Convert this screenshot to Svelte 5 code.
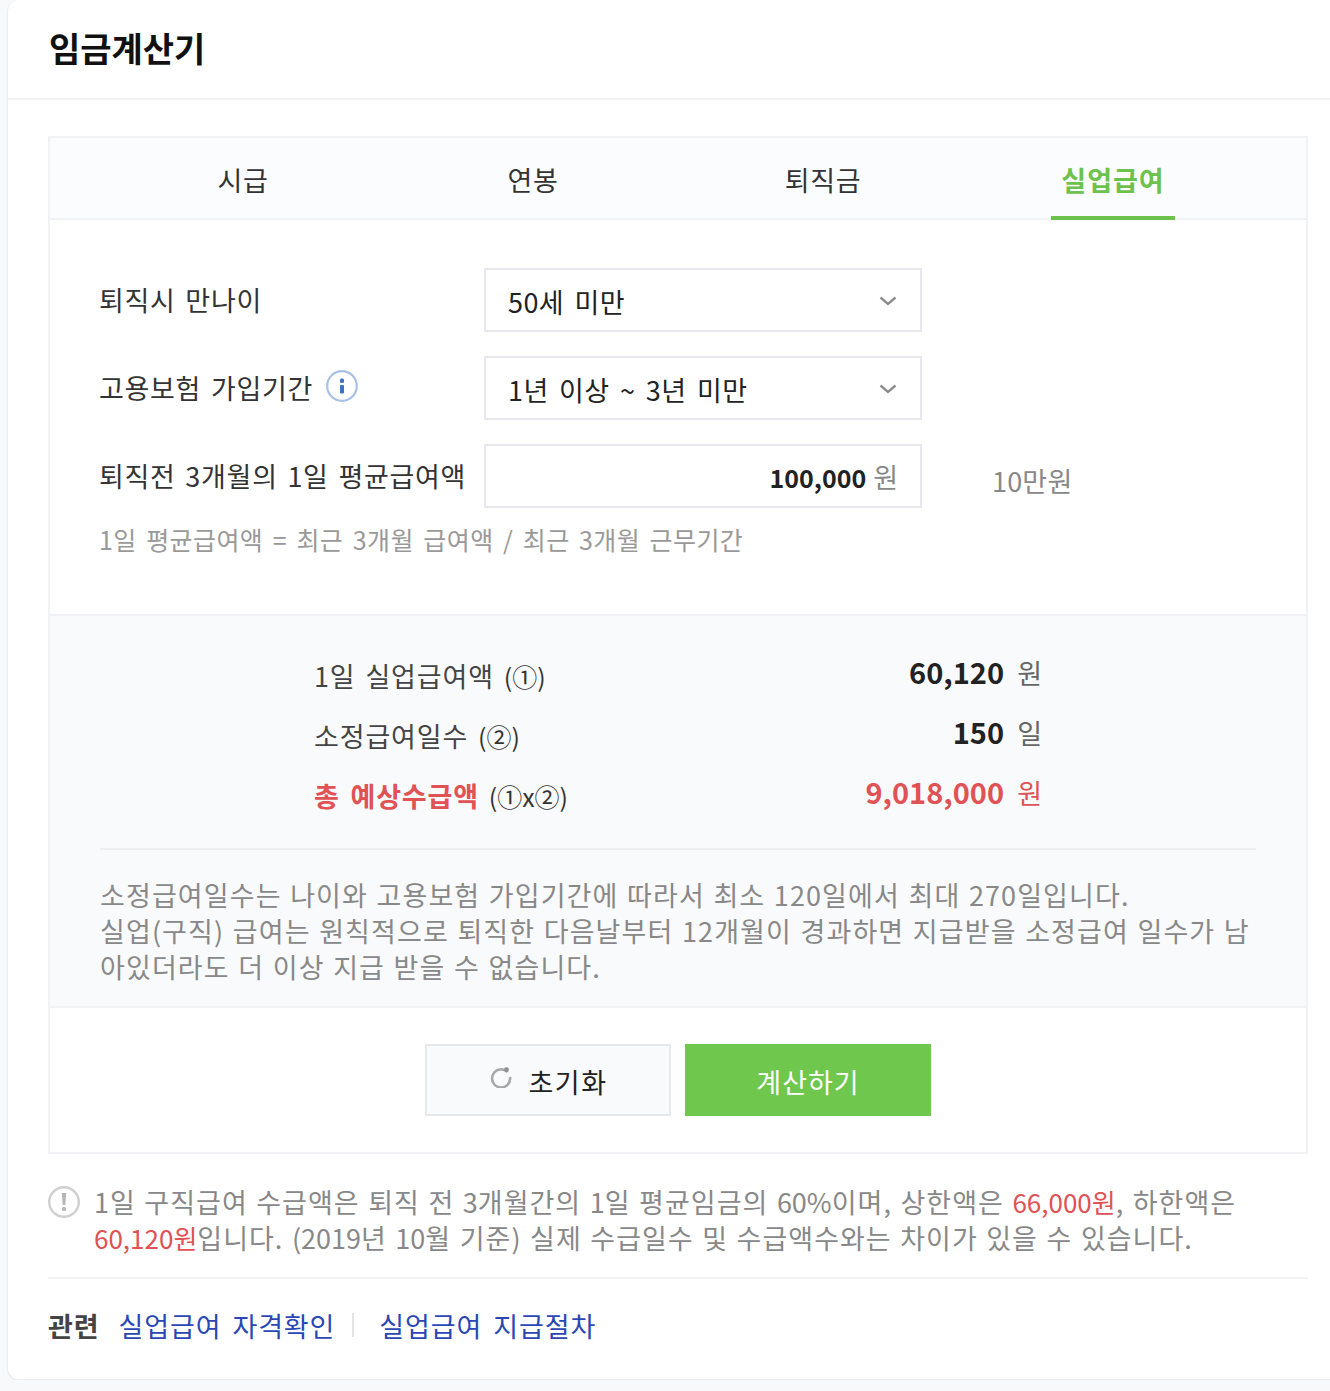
<script>
  const tabs = ['시급', '연봉', '퇴직금', '실업급여'];
  let active = $state(3);
  let age = $state('50세 미만');
  let period = $state('1년 이상 ~ 3년 미만');
  let pay = $state('100,000');

  const results = [
    { label: '1일 실업급여액', note: '(①)', value: '60,120', unit: '원' },
    { label: '소정급여일수', note: '(②)', value: '150', unit: '일' },
    { label: '총 예상수급액', note: '(①x②)', value: '9,018,000', unit: '원', total: true },
  ];
</script>

<div class="card">
  <h1 class="title">임금계산기</h1>

  <div class="body">
    <div class="calc">
      <nav class="tabs">
        {#each tabs as t, i}
          <button class="tab" class:on={active === i} onclick={() => (active = i)}><span>{t}</span></button>
        {/each}
      </nav>

      <div class="form">
        <div class="row">
          <span class="label">퇴직시 만나이</span>
          <div class="field">
            <select bind:value={age}>
              <option>50세 미만</option>
              <option>50세 이상</option>
            </select>
            <svg class="chev" width="18" height="10" viewBox="0 0 18 10"><path d="M1.5 1.5 9 8l7.5-6.5" fill="none" stroke="#8c8c8c" stroke-width="2.4"/></svg>
          </div>
        </div>
        <div class="row">
          <span class="label">고용보험 가입기간
            <svg class="info" width="32" height="32" viewBox="0 0 32 32">
              <circle cx="16" cy="16" r="14.8" fill="#fff" stroke="#a9c0e6" stroke-width="2.2"/>
              <rect x="14" y="8.5" width="4" height="4.5" rx="1.5" fill="#3f72c4"/>
              <rect x="14" y="15" width="4" height="8.5" rx="1" fill="#3f72c4"/>
            </svg>
          </span>
          <div class="field">
            <select bind:value={period}>
              <option>1년 이상 ~ 3년 미만</option>
              <option>3년 이상 ~ 5년 미만</option>
            </select>
            <svg class="chev" width="18" height="10" viewBox="0 0 18 10"><path d="M1.5 1.5 9 8l7.5-6.5" fill="none" stroke="#8c8c8c" stroke-width="2.4"/></svg>
          </div>
        </div>
        <div class="row">
          <span class="label">퇴직전 3개월의 1일 평균급여액</span>
          <div class="field money">
            <input bind:value={pay} />
            <span class="won">원</span>
          </div>
          <span class="hint-val">10만원</span>
        </div>
        <p class="formula">1일 평균급여액 = 최근 3개월 급여액 / 최근 3개월 근무기간</p>
      </div>

      <div class="result">
        <div class="lines">
          {#each results as r}
            <div class="line" class:total={r.total}>
              <span class="name"><em>{r.label}</em> <i>{r.note}</i></span>
              <strong>{r.value}</strong>
              <span class="unit">{r.unit}</span>
            </div>
          {/each}
        </div>
        <p class="desc">소정급여일수는 나이와 고용보험 가입기간에 따라서 최소 120일에서 최대 270일입니다.<br />실업(구직) 급여는 원칙적으로 퇴직한 다음날부터 12개월이 경과하면 지급받을 소정급여 일수가 남아있더라도 더 이상 지급 받을 수 없습니다.</p>
      </div>

      <div class="actions">
        <button class="btn reset">
          <svg width="22" height="22" viewBox="0 0 22 22"><path d="M17.6 6.2A9 9 0 1 0 20 11" fill="none" stroke="#a8a8a8" stroke-width="2.6"/><circle cx="16.5" cy="3.6" r="2.4" fill="#8f8f8f"/></svg>
          <span>초기화</span>
        </button>
        <button class="btn go"><span>계산하기</span></button>
      </div>
    </div>

    <div class="notice">
      <svg class="warn" width="32" height="32" viewBox="0 0 32 32">
        <circle cx="16" cy="16" r="14.8" fill="#fff" stroke="#cfcfcf" stroke-width="2.4"/>
        <path d="M13.8 7h4.4L17.3 19h-2.6z" fill="#b5b5b5"/>
        <rect x="14" y="21" width="4" height="4" rx="1.5" fill="#b5b5b5"/>
      </svg>
      <p>1일 구직급여 수급액은 퇴직 전 <span class="n">3</span>개월간의 <span class="n">1</span>일 평균임금의 <span class="n">60%</span>이며, 상한액은 <b>66,000원</b>, 하한액은 <b>60,120원</b>입니다. <span class="n">(2019</span>년 <span class="n">10</span>월 기준) 실제 수급일수 및 수급액수와는 차이가 있을 수 있습니다.</p>
    </div>

    <div class="related">
      <strong>관련</strong>
      <a href="#qualify">실업급여 자격확인</a>
      <span class="sep"></span>
      <a href="#steps">실업급여 지급절차</a>
    </div>
  </div>
</div>

<style>
  :global(body) {
    background: #f8f9fb;
    overflow: hidden;
    font-family: "Noto Sans CJK KR", "Noto Sans", sans-serif;
  }

  .card {
    box-sizing: border-box;
    width: 1342px;
    height: 1380px;
    margin-left: 7px;
    background: #fff;
    border: 1px solid #eceef2;
    border-top: none;
    border-radius: 12px;
    box-shadow: 0 1px 2px rgba(0, 0, 0, 0.06);
  }

  .title {
    box-sizing: border-box;
    height: 100px;
    margin: 0;
    padding: 25px 0 0 41px;
    font-size: 34px;
    line-height: 46px;
    font-weight: 700;
    color: #111;
    border-bottom: 2px solid #f1f2f4;
  }

  .body { padding: 36px 0 0 40px; width: 1260px; }

  .calc {
    border: 2px solid #f1f2f5;
    height: 1018px;
    box-sizing: border-box;
  }

  .tabs {
    display: flex;
    justify-content: center;
    align-items: flex-start;
    height: 82px;
    background: #fbfcfd;
    border-bottom: 2px solid #f1f2f5;
    box-sizing: border-box;
  }
  .tab {
    width: 290px;
    height: 82px;
    padding: 0;
    border: none;
    background: none;
    font: inherit;
    font-size: 27px;
    letter-spacing: 0.6px;
    color: #333;
    cursor: pointer;
  }
  .tab span {
    display: inline-block;
    height: 82px;
    line-height: 84px;
    padding: 0 10px;
    box-sizing: border-box;
  }
  .tab.on { color: #6cc24a; font-weight: 700; letter-spacing: 1px; }
  .tab.on span { border-bottom: 4px solid #6cc24a; }

  .form {
    box-sizing: border-box;
    height: 396px;
    padding: 48px 49px 0;
    border-bottom: 2px solid #f1f2f5;
  }
  .row {
    display: flex;
    align-items: center;
    height: 64px;
    margin-bottom: 24px;
  }
  .label {
    display: flex;
    align-items: center;
    width: 385px;
    padding-bottom: 1px;
    font-size: 27px;
    letter-spacing: 0.7px;
    word-spacing: 3px;
    color: #333;
  }
  .info { margin: -4px 0 0 13px; }

  .field {
    position: relative;
    box-sizing: border-box;
    width: 438px;
    height: 64px;
    border: 2px solid #e6e8ee;
    background: #fff;
  }
  .field select {
    appearance: none;
    width: 100%;
    height: 100%;
    padding: 3px 60px 0 22px;
    border: none;
    outline: none;
    background: none;
    font: inherit;
    font-size: 27px;
    letter-spacing: 0.4px;
    word-spacing: 4px;
    color: #222;
  }
  .chev { position: absolute; right: 23px; top: 26px; pointer-events: none; }

  .money { display: flex; align-items: center; padding-right: 22px; }
  .money input {
    flex: 1;
    min-width: 0;
    padding: 2px 7px 0 0;
    border: none;
    outline: none;
    background: none;
    text-align: right;
    font: inherit;
    font-size: 25px;
    font-weight: 700;
    color: #222;
  }
  .won { font-size: 27px; color: #888; }
  .hint-val { margin-left: 70px; font-size: 27px; letter-spacing: 0.2px; color: #888; padding-top: 8px; }

  .formula {
    margin: -11px 0 0;
    font-size: 25px;
    line-height: 36px;
    letter-spacing: 0.4px;
    word-spacing: 3.5px;
    color: #999;
  }

  .result {
    box-sizing: border-box;
    height: 392px;
    padding: 30px 50px 0;
    background: #f9fafc;
    border-bottom: 2px solid #f1f2f5;
  }
  .lines { padding: 0 214px 0 214px; height: 204px; border-bottom: 2px solid #eceef1; box-sizing: border-box; }
  .line { display: flex; align-items: center; height: 60px; font-size: 27px; color: #444; }
  .name { flex: 1; padding-bottom: 2px; letter-spacing: 0.85px; word-spacing: 3px; }
  .name em { font-style: normal; }
  .name i { font-style: normal; font-size: 25px; color: #333; letter-spacing: 0; }
  .line strong { font-size: 29px; padding-bottom: 10px; color: #222; }
  .unit { width: 38px; padding-bottom: 8px; text-align: right; color: #666; }
  .total em { font-weight: 700; color: #e05254; letter-spacing: 0.8px; word-spacing: 4px; }
  .total strong { color: #e05254; }
  .total .unit { color: #e05254; }

  .desc {
    margin: 27px 0 0;
    font-size: 27px;
    line-height: 36px;
    letter-spacing: 1.1px;
    word-spacing: 1.4px;
    color: #888;
    word-break: break-all;
  }
  .n { letter-spacing: 0; }

  .actions {
    display: flex;
    justify-content: center;
    gap: 14px;
    padding-top: 36px;
  }
  .btn {
    box-sizing: border-box;
    display: flex;
    align-items: center;
    justify-content: center;
    gap: 16px;
    width: 246px;
    height: 72px;
    font: inherit;
    font-size: 27px;
    letter-spacing: 1.5px;
    cursor: pointer;
  }
  .btn span { padding-top: 2px; }
  .reset { background: #f9fafc; border: 2px solid #e6e8ee; color: #222; }
  .reset svg { margin: -6px 0 0 2px; }
  .go { background: #6fc74d; border: none; color: #fff; letter-spacing: 1px; }

  .notice {
    display: flex;
    gap: 14px;
    margin-top: 32px;
    padding-bottom: 19px;
    border-bottom: 2px solid #f1f2f4;
  }
  .warn { flex: none; }
  .notice p {
    margin: -2px 0 2px;
    font-size: 27px;
    line-height: 36px;
    letter-spacing: 1px;
    word-spacing: 1.5px;
    color: #888;
  }
  .notice b { font-weight: 400; letter-spacing: 0; color: #e05254; font-size: 26px; }

  .related {
    display: flex;
    align-items: center;
    height: 92px;
    font-size: 27px;
    letter-spacing: 0.9px;
    word-spacing: 4px;
  }
  .related strong { color: #444; margin-right: 19px; }
  .related a { color: #2a47b5; text-decoration: none; }
  .sep { width: 2px; height: 24px; margin: 0 25px 0 17px; background: #e4e4e4; }
</style>
